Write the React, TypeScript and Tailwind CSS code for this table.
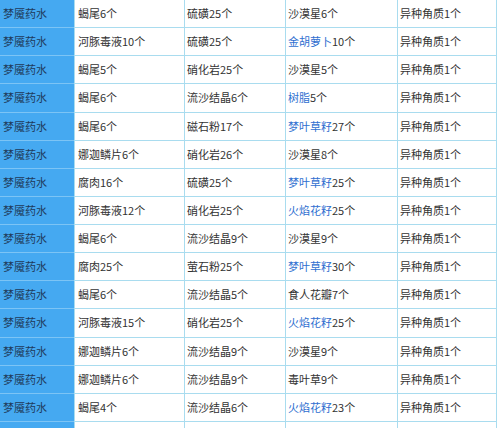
import React from "react";

type Cell = { blue?: string; rest: string } | string;

const rows: [string, string, Cell, string][] = [
  ["蝎尾6个", "硫磺25个", "沙漠星6个", "异种角质1个"],
  ["河豚毒液10个", "硫磺25个", { blue: "金胡萝卜", rest: "10个" }, "异种角质1个"],
  ["蝎尾5个", "硝化岩25个", "沙漠星5个", "异种角质1个"],
  ["蝎尾6个", "流沙结晶6个", { blue: "树脂", rest: "5个" }, "异种角质1个"],
  ["蝎尾6个", "磁石粉17个", { blue: "梦叶草籽", rest: "27个" }, "异种角质1个"],
  ["娜迦鳞片6个", "硝化岩26个", "沙漠星8个", "异种角质1个"],
  ["腐肉16个", "硫磺25个", { blue: "梦叶草籽", rest: "25个" }, "异种角质1个"],
  ["河豚毒液12个", "硝化岩25个", { blue: "火焰花籽", rest: "25个" }, "异种角质1个"],
  ["蝎尾6个", "流沙结晶9个", "沙漠星9个", "异种角质1个"],
  ["腐肉25个", "萤石粉25个", { blue: "梦叶草籽", rest: "30个" }, "异种角质1个"],
  ["蝎尾6个", "流沙结晶5个", "食人花瓣7个", "异种角质1个"],
  ["河豚毒液15个", "硝化岩25个", { blue: "火焰花籽", rest: "25个" }, "异种角质1个"],
  ["娜迦鳞片6个", "流沙结晶9个", "沙漠星9个", "异种角质1个"],
  ["娜迦鳞片6个", "流沙结晶9个", "毒叶草9个", "异种角质1个"],
  ["蝎尾4个", "流沙结晶6个", { blue: "火焰花籽", rest: "23个" }, "异种角质1个"],
];

function renderCell(c: Cell) {
  if (typeof c === "string") return c;
  return (
    <>
      <span className="text-[#2f6fd0]">{c.blue}</span>
      {c.rest}
    </>
  );
}

const cellBase = "border-l border-b border-[#a9dcef] flex items-center leading-none";

export default function App() {
  return (
    <div
      className="w-[500px] h-[428px] overflow-hidden bg-white text-[11px] text-[#333]"
      style={{ fontFamily: '"Microsoft YaHei", "Noto Sans CJK SC", sans-serif' }}
    >
      <div className="w-[497px]">
        {rows.map((r, i) => (
          <div key={i} className="grid grid-cols-[74px_110px_101px_112px_100px] h-[28.13px]">
            <div className="bg-[#45a9f1] border-b border-[#7cc4f5] flex items-center pl-[3px] text-[#1f3a5a] leading-none">
              梦魇药水
            </div>
            <div className={`${cellBase} pl-[3px]`}>{r[0]}</div>
            <div className={`${cellBase} pl-[2px]`}>{r[1]}</div>
            <div className={`${cellBase} pl-[2px]`}>{renderCell(r[2])}</div>
            <div className={`${cellBase} border-r pl-[2px]`}>{r[3]}</div>
          </div>
        ))}
        <div className="grid grid-cols-[74px_110px_101px_112px_100px] h-[28px]">
          <div className="bg-[#45a9f1]" />
          <div className="border-l border-[#a9dcef]" />
          <div className="border-l border-[#a9dcef]" />
          <div className="border-l border-[#a9dcef]" />
          <div className="border-l border-r border-[#a9dcef]" />
        </div>
      </div>
    </div>
  );
}
